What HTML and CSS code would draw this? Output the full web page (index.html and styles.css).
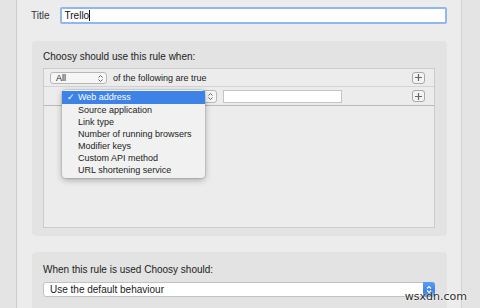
FILE: index.html
```html
<!DOCTYPE html>
<html lang="en">
<head>
  <meta charset="UTF-8" />
  <title>Choosy rule</title>
  <link rel="stylesheet" href="styles.css">
</head>
<body>
  <div class="window">
    <div class="title-row">
      <label class="title-label">Title</label>
      <div class="text-input">Trello<span class="caret"></span></div>
    </div>

    <section class="panel rules">
      <p class="panel-label">Choosy should use this rule when:</p>
      <div class="rule-box">
        <div class="rule-row">
          <div class="popup popup-all">All
            <svg class="arrows" width="7" height="9" viewBox="0 0 7 9"><path d="M1.5 3.5 L3.5 1.5 L5.5 3.5 M1.5 5.5 L3.5 7.5 L5.5 5.5" fill="none" stroke="#666" stroke-width="1"/></svg>
          </div>
          <span class="row-text">of the following are true</span>
          <button class="plus"><svg width="7" height="7" viewBox="0 0 7 7"><path d="M3.5 0 V7 M0 3.5 H7" stroke="#666" stroke-width="1.2"/></svg></button>
        </div>
        <div class="rule-row second">
          <div class="popup popup-kind">
            <svg class="arrows" width="7" height="9" viewBox="0 0 7 9"><path d="M1.5 3.5 L3.5 1.5 L5.5 3.5 M1.5 5.5 L3.5 7.5 L5.5 5.5" fill="none" stroke="#666" stroke-width="1"/></svg>
          </div>
          <div class="field"></div>
          <button class="plus"><svg width="7" height="7" viewBox="0 0 7 7"><path d="M3.5 0 V7 M0 3.5 H7" stroke="#666" stroke-width="1.2"/></svg></button>

          <ul class="menu">
            <li class="selected"><span class="check">✓</span>Web address</li>
            <li>Source application</li>
            <li>Link type</li>
            <li>Number of running browsers</li>
            <li>Modifier keys</li>
            <li>Custom API method</li>
            <li>URL shortening service</li>
          </ul>
        </div>
      </div>
    </section>

    <section class="panel action">
      <p class="panel-label">When this rule is used Choosy should:</p>
      <div class="select">
        <span>Use the default behaviour</span>
        <span class="select-btn">
          <svg width="6" height="9" viewBox="0 0 6 9"><path d="M1 3.5 L3 1.5 L5 3.5 M1 5.5 L3 7.5 L5 5.5" fill="none" stroke="#fff" stroke-width="1.1"/></svg>
        </span>
      </div>
    </section>
  </div>
  <div class="watermark">wsxdn.com</div>
</body>
</html>
```
FILE: styles.css
```css
body {
  margin: 0;
  height: 308px;
  overflow: hidden;
  background: #e4e4e4;
  font-family: "Liberation Sans", Arial, sans-serif;
  color: #222;
  position: relative;
}
.window {
  margin-left: 16px;
  width: 446px;
  height: 308px;
  overflow: hidden;
  box-sizing: border-box;
  background: #ececec;
  border-left: 1px solid #cdcdcd;
  border-right: 1px solid #d2d2d2;
  padding-top: 7px;
}
.title-row {
  display: flex;
  align-items: center;
  padding: 0 14px 0 14px;
  gap: 10px;
}
.title-label {
  font-size: 10px;
  color: #333;
}
.text-input {
  flex: 1;
  height: 17px;
  box-sizing: border-box;
  border: 2px solid #90b8ef;
  border-radius: 2px;
  background: #fff;
  font-size: 10px;
  line-height: 13px;
  padding-left: 3px;
  color: #111;
}
.caret {
  display: inline-block;
  width: 1px;
  height: 11px;
  background: #111;
  vertical-align: -2px;
}
.panel {
  margin: 17px 14px 0 15px;
  background: #e3e3e3;
  border-radius: 4px;
  padding: 9px 12px 8px 11px;
}
.panel-label {
  margin: 0 0 5px;
  font-size: 10px;
  line-height: 13px;
  color: #222;
}
.rule-box {
  height: 160px;
  box-sizing: border-box;
  border: 1px solid #cbcbcb;
  background: #ececec;
}
.rule-row {
  display: flex;
  align-items: center;
  height: 18px;
  box-sizing: border-box;
  border-bottom: 1px solid #d4d4d4;
  padding-left: 6px;
  position: relative;
}
.rule-row.second {
  height: 19px;
  border-bottom: 1px solid #b9b9b9;
  padding-left: 26px;
}
.popup {
  position: relative;
  height: 12px;
  box-sizing: border-box;
  border: 1px solid #b8b8b8;
  border-radius: 3px;
  background: #f6f6f6;
  font-size: 9px;
  line-height: 10px;
  padding-left: 5px;
  color: #222;
}
.popup-all { width: 57px; }
.popup-kind { width: 147px; height: 13px; }
.arrows {
  position: absolute;
  right: 2px;
  top: 1px;
}
.row-text {
  font-size: 9px;
  margin-left: 6px;
  color: #222;
}
.plus {
  margin-left: auto;
  margin-right: 9px;
  width: 13px;
  height: 12px;
  padding: 0;
  border: 1px solid #a9a9a9;
  border-radius: 3px;
  background: #f4f4f4;
  display: flex;
  align-items: center;
  justify-content: center;
}
.field {
  margin-left: 6px;
  width: 119px;
  height: 13px;
  box-sizing: border-box;
  background: #fff;
  border: 1px solid #c4c4c4;
}
.menu {
  position: absolute;
  left: 18px;
  top: 3px;
  width: 143px;
  margin: 0;
  padding: 1px 0 2px;
  list-style: none;
  background: #f1f1f1;
  border-radius: 4px;
  box-shadow: 0 2px 6px rgba(0,0,0,0.3), 0 0 0 1px rgba(0,0,0,0.08);
  font-size: 9px;
}
.menu li {
  height: 12px;
  line-height: 12px;
  padding-left: 16px;
  color: #222;
  position: relative;
}
.menu li.selected {
  height: 13px;
  line-height: 13px;
  background: #3d82e6;
  color: #fff;
}
.check {
  position: absolute;
  left: 5px;
  font-size: 9px;
}
.action {
  margin-top: 16px;
  padding-top: 11px;
  height: 60px;
}
.action .panel-label {
  margin-bottom: 6px;
}
.select {
  display: flex;
  align-items: center;
  height: 15px;
  box-sizing: border-box;
  border: 1px solid #c2c2c2;
  border-radius: 3px;
  background: #fff;
  font-size: 10px;
  padding-left: 6px;
  color: #222;
}
.select-btn {
  margin-left: auto;
  width: 12px;
  height: 15px;
  margin-top: -1px;
  margin-bottom: -1px;
  margin-right: -1px;
  border-radius: 0 3px 3px 0;
  background: linear-gradient(#5a9cf3, #2f74e4);
  display: flex;
  align-items: center;
  justify-content: center;
}
.watermark {
  position: absolute;
  right: 13px;
  bottom: 5px;
  font-family: "DejaVu Sans", Verdana, sans-serif;
  font-size: 11px;
  color: #2a2a2a;
  text-shadow: 0 0 2px #fff, 0 0 2px #fff;
}
```
